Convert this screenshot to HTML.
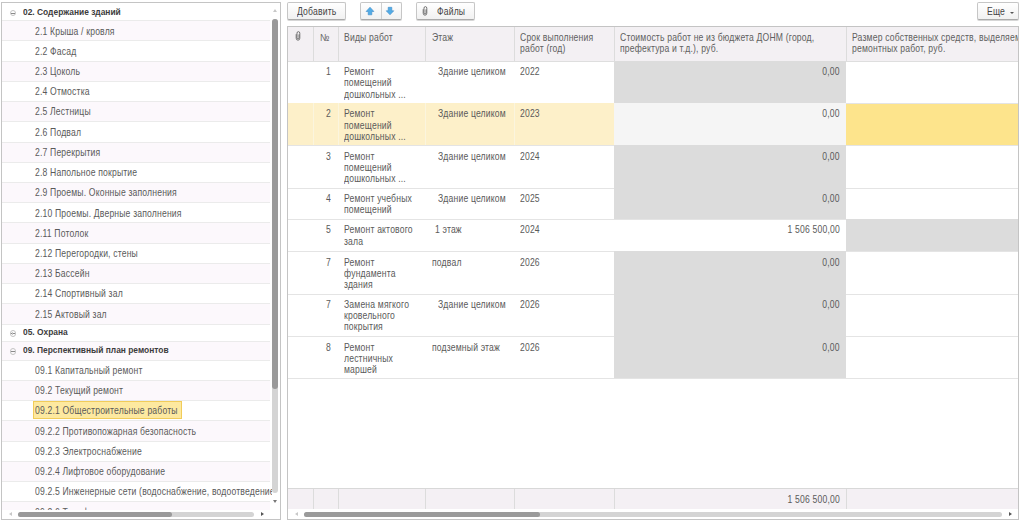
<!DOCTYPE html><html><head><meta charset="utf-8"><style>
*{margin:0;padding:0;box-sizing:border-box}
html,body{width:1024px;height:522px;overflow:hidden;background:#fff}
body{position:relative;font-family:"Liberation Sans",sans-serif;font-size:10.2px;color:#5a5a5a}
.a{position:absolute}
.t{position:absolute;white-space:nowrap;line-height:11px;height:11px;margin-top:-8.1px;transform:scaleX(.845);letter-spacing:.2px;transform-origin:0 0}
.r{transform-origin:100% 0}
.b{position:absolute;white-space:nowrap;font-weight:bold;font-size:9.2px;line-height:11px;margin-top:-6.7px;color:#3c3c3c;transform:scaleX(.915);transform-origin:0 0}
.hl{position:absolute;height:1px;background:#e6e6e6}
.vl{position:absolute;width:1px;background:#dcdcdc}
.btn{position:absolute;border:1px solid #c6c6c6;border-bottom-color:#aaa;border-radius:2px;background:linear-gradient(#fff,#f1f1f1);box-shadow:0 1px 0 #d6d6d6}
</style></head><body>
<div class="a" style="left:1px;top:2px;width:280px;height:518px;border:1px solid #c4c4c4;background:#fff;overflow:hidden"></div>
<div class="a" style="left:2px;top:3px;width:270px;height:507px;overflow:hidden">
<div class="a" style="left:0;top:0px;width:268px;height:17px;background:#fff"></div>
<div class="a" style="left:0;top:17px;width:268px;height:20px;background:#fcf8fc"></div>
<div class="a" style="left:0;top:37px;width:268px;height:21px;background:#fff"></div>
<div class="a" style="left:0;top:58px;width:268px;height:20px;background:#fcf8fc"></div>
<div class="a" style="left:0;top:78px;width:268px;height:20px;background:#fff"></div>
<div class="a" style="left:0;top:98px;width:268px;height:20px;background:#fcf8fc"></div>
<div class="a" style="left:0;top:118px;width:268px;height:21px;background:#fff"></div>
<div class="a" style="left:0;top:139px;width:268px;height:20px;background:#fcf8fc"></div>
<div class="a" style="left:0;top:159px;width:268px;height:20px;background:#fff"></div>
<div class="a" style="left:0;top:179px;width:268px;height:20px;background:#fcf8fc"></div>
<div class="a" style="left:0;top:199px;width:268px;height:20px;background:#fff"></div>
<div class="a" style="left:0;top:219px;width:268px;height:21px;background:#fcf8fc"></div>
<div class="a" style="left:0;top:240px;width:268px;height:20px;background:#fff"></div>
<div class="a" style="left:0;top:260px;width:268px;height:20px;background:#fcf8fc"></div>
<div class="a" style="left:0;top:280px;width:268px;height:20px;background:#fff"></div>
<div class="a" style="left:0;top:300px;width:268px;height:21px;background:#fcf8fc"></div>
<div class="a" style="left:0;top:321px;width:268px;height:17px;background:#fff"></div>
<div class="a" style="left:0;top:338px;width:268px;height:19px;background:#fcf8fc"></div>
<div class="a" style="left:0;top:357px;width:268px;height:20px;background:#fff"></div>
<div class="a" style="left:0;top:377px;width:268px;height:20px;background:#fcf8fc"></div>
<div class="a" style="left:0;top:397px;width:268px;height:20px;background:#fff"></div>
<div class="a" style="left:0;top:417px;width:268px;height:21px;background:#fcf8fc"></div>
<div class="a" style="left:0;top:438px;width:268px;height:20px;background:#fff"></div>
<div class="a" style="left:0;top:458px;width:268px;height:20px;background:#fcf8fc"></div>
<div class="a" style="left:0;top:478px;width:268px;height:20px;background:#fff"></div>
<div class="a" style="left:0;top:498px;width:268px;height:21px;background:#fcf8fc"></div>
<div class="hl" style="left:0;top:17px;width:268px;background:#ebebeb"></div>
<div class="hl" style="left:0;top:37px;width:268px;background:#ebebeb"></div>
<div class="hl" style="left:0;top:58px;width:268px;background:#ebebeb"></div>
<div class="hl" style="left:0;top:78px;width:268px;background:#ebebeb"></div>
<div class="hl" style="left:0;top:98px;width:268px;background:#ebebeb"></div>
<div class="hl" style="left:0;top:118px;width:268px;background:#ebebeb"></div>
<div class="hl" style="left:0;top:139px;width:268px;background:#ebebeb"></div>
<div class="hl" style="left:0;top:159px;width:268px;background:#ebebeb"></div>
<div class="hl" style="left:0;top:179px;width:268px;background:#ebebeb"></div>
<div class="hl" style="left:0;top:199px;width:268px;background:#ebebeb"></div>
<div class="hl" style="left:0;top:219px;width:268px;background:#ebebeb"></div>
<div class="hl" style="left:0;top:240px;width:268px;background:#ebebeb"></div>
<div class="hl" style="left:0;top:260px;width:268px;background:#ebebeb"></div>
<div class="hl" style="left:0;top:280px;width:268px;background:#ebebeb"></div>
<div class="hl" style="left:0;top:300px;width:268px;background:#ebebeb"></div>
<div class="hl" style="left:0;top:321px;width:268px;background:#ebebeb"></div>
<div class="hl" style="left:0;top:338px;width:268px;background:#ebebeb"></div>
<div class="hl" style="left:0;top:357px;width:268px;background:#ebebeb"></div>
<div class="hl" style="left:0;top:377px;width:268px;background:#ebebeb"></div>
<div class="hl" style="left:0;top:397px;width:268px;background:#ebebeb"></div>
<div class="hl" style="left:0;top:417px;width:268px;background:#ebebeb"></div>
<div class="hl" style="left:0;top:438px;width:268px;background:#ebebeb"></div>
<div class="hl" style="left:0;top:458px;width:268px;background:#ebebeb"></div>
<div class="hl" style="left:0;top:478px;width:268px;background:#ebebeb"></div>
<div class="hl" style="left:0;top:498px;width:268px;background:#ebebeb"></div>
<div class="hl" style="left:0;top:519px;width:268px;background:#ebebeb"></div>
<div class="b" style="left:21px;top:10.4px;">02. Содержание зданий</div>
<div class="a" style="left:7.5px;top:6.9px;width:6.6px;height:6.6px;border:1px solid #c4c4c4;border-radius:50%"></div>
<div class="a" style="left:9px;top:9.6px;width:3.6px;height:1.2px;background:#8a8a8a"></div>
<div class="t" style="left:33px;top:30.6px;">2.1 Крыша / кровля</div>
<div class="t" style="left:33px;top:50.8px;">2.2 Фасад</div>
<div class="t" style="left:33px;top:71.0px;">2.3 Цоколь</div>
<div class="t" style="left:33px;top:91.3px;">2.4 Отмостка</div>
<div class="t" style="left:33px;top:111.5px;">2.5 Лестницы</div>
<div class="t" style="left:33px;top:131.7px;">2.6 Подвал</div>
<div class="t" style="left:33px;top:151.9px;">2.7 Перекрытия</div>
<div class="t" style="left:33px;top:172.1px;">2.8 Напольное покрытие</div>
<div class="t" style="left:33px;top:192.4px;">2.9 Проемы. Оконные заполнения</div>
<div class="t" style="left:33px;top:212.6px;">2.10 Проемы. Дверные заполнения</div>
<div class="t" style="left:33px;top:232.8px;">2.11 Потолок</div>
<div class="t" style="left:33px;top:253.0px;">2.12 Перегородки, стены</div>
<div class="t" style="left:33px;top:273.2px;">2.13 Бассейн</div>
<div class="t" style="left:33px;top:293.5px;">2.14 Спортивный зал</div>
<div class="t" style="left:33px;top:313.7px;">2.15 Актовый зал</div>
<div class="b" style="left:21px;top:330.9px;">05. Охрана</div>
<div class="a" style="left:7.5px;top:327.4px;width:6.6px;height:6.6px;border:1px solid #c4c4c4;border-radius:50%"></div>
<div class="a" style="left:9px;top:330.1px;width:3.6px;height:1.2px;background:#8a8a8a"></div>
<div class="a" style="left:10.3px;top:328.9px;width:1px;height:3.6px;background:#c8c8c8"></div>
<div class="b" style="left:21px;top:348.5px;">09. Перспективный план ремонтов</div>
<div class="a" style="left:7.5px;top:345.0px;width:6.6px;height:6.6px;border:1px solid #c4c4c4;border-radius:50%"></div>
<div class="a" style="left:9px;top:347.7px;width:3.6px;height:1.2px;background:#8a8a8a"></div>
<div class="t" style="left:33px;top:370.0px;">09.1 Капитальный ремонт</div>
<div class="t" style="left:33px;top:390.2px;">09.2 Текущий ремонт</div>
<div class="a" style="left:31px;top:398px;width:149px;height:18px;background:#fde9a0;border:1px solid #f1cc5a"></div>
<div class="t" style="left:33px;top:410.5px;">09.2.1 Общестроительные работы</div>
<div class="t" style="left:33px;top:430.8px;">09.2.2 Противопожарная безопасность</div>
<div class="t" style="left:33px;top:451.0px;">09.2.3 Электроснабжение</div>
<div class="t" style="left:33px;top:471.2px;">09.2.4 Лифтовое оборудование</div>
<div class="t" style="left:33px;top:491.5px;">09.2.5 Инженерные сети (водоснабжение, водоотведение)</div>
<div class="t" style="left:33px;top:511.8px;">09.2.6 Телефонизация</div>
</div>
<div class="a" style="left:272px;top:19px;width:6px;height:474px;border-radius:3px;background:#d4d4d4"></div>
<div class="a" style="left:272px;top:19px;width:6px;height:370px;border-radius:3px;background:#9a9a9a"></div>
<div class="a" style="left:272.5px;top:9px;width:0;height:0;border-left:2.5px solid transparent;border-right:2.5px solid transparent;border-bottom:3px solid #c8c8c8"></div>
<div class="a" style="left:272.5px;top:499.5px;width:0;height:0;border-left:2.5px solid transparent;border-right:2.5px solid transparent;border-top:3px solid #777"></div>
<div class="a" style="left:18px;top:511.5px;width:236px;height:5.2px;border-radius:3px;background:#d4d4d4"></div>
<div class="a" style="left:18px;top:511.5px;width:154px;height:5.2px;border-radius:3px;background:#9a9a9a"></div>
<div class="a" style="left:8.5px;top:512px;width:0;height:0;border-top:2.5px solid transparent;border-bottom:2.5px solid transparent;border-right:3px solid #c8c8c8"></div>
<div class="a" style="left:260.5px;top:512px;width:0;height:0;border-top:2.5px solid transparent;border-bottom:2.5px solid transparent;border-left:3px solid #555"></div>
<div class="btn" style="left:287px;top:2px;width:59px;height:17.5px"></div>
<div class="t" style="left:297px;top:14.5px;color:#444;">Добавить</div>
<div class="btn" style="left:360px;top:2px;width:42px;height:17.5px"></div>
<div class="a" style="left:381px;top:3px;width:1px;height:16px;background:#cfcfcf"></div>
<svg class="a" style="left:365px;top:6px" width="10" height="10" viewBox="0 0 10 10"><path d="M5 1.2 L8.9 5.5 L6.8 5.5 L6.8 8.8 L3.2 8.8 L3.2 5.5 L1.1 5.5 Z" fill="#52ace6" stroke="#3f8cc8" stroke-width="0.6" stroke-linejoin="round"/></svg>
<svg class="a" style="left:385px;top:6px" width="10" height="10" viewBox="0 0 10 10"><path d="M5 8.8 L8.8 4.8 L6.8 4.8 L6.8 1.3 L3.2 1.3 L3.2 4.8 L1.2 4.8 Z" fill="#52ace6" stroke="#3f8cc8" stroke-width="0.6" stroke-linejoin="round"/></svg>
<div class="btn" style="left:416px;top:2px;width:59px;height:17.5px"></div>
<svg class="a" style="left:422px;top:5.5px" width="6" height="10" viewBox="0 0 6 10"><path d="M1.2 3.2 L1.2 7.2 Q1.2 9.2 3 9.2 Q4.8 9.2 4.8 7.2 L4.8 2.2 Q4.8 0.6 3.4 0.6 Q2 0.6 2 2.2 L2 6.8 Q2 7.8 3 7.8 Q4 7.8 4 6.8 L4 3.4" fill="none" stroke="#666" stroke-width="0.9"/></svg>
<div class="t" style="left:437px;top:14.5px;color:#444;">Файлы</div>
<div class="btn" style="left:976.5px;top:2px;width:42px;height:17.5px"></div>
<div class="t" style="left:987px;top:14.5px;color:#444;">Еще</div>
<div class="a" style="left:1009.5px;top:11.5px;width:0;height:0;border-left:2.5px solid transparent;border-right:2.5px solid transparent;border-top:2.5px solid #555"></div>
<div class="a" style="left:287px;top:26px;width:732px;height:494px;border:1px solid #c4c4c4;background:#fff"></div>
<div class="a" style="left:288px;top:27px;width:730px;height:492px;overflow:hidden">
<div class="a" style="left:0;top:0;width:800px;height:33.5px;background:#f3f0f3"></div>
<div class="hl" style="left:0;top:33.5px;width:800px;background:#dedede"></div>
<div class="vl" style="left:25.3px;top:0;height:33.5px;background:#dcdcdc"></div>
<div class="vl" style="left:49.5px;top:0;height:33.5px;background:#dcdcdc"></div>
<div class="vl" style="left:137.3px;top:0;height:33.5px;background:#dcdcdc"></div>
<div class="vl" style="left:225.5px;top:0;height:33.5px;background:#dcdcdc"></div>
<div class="vl" style="left:325.5px;top:0;height:33.5px;background:#dcdcdc"></div>
<div class="vl" style="left:557.8px;top:0;height:33.5px;background:#dcdcdc"></div>
<svg class="a" style="left:7px;top:4.2px" width="6" height="10" viewBox="0 0 6 10"><path d="M1.2 3.2 L1.2 7.2 Q1.2 9.2 3 9.2 Q4.8 9.2 4.8 7.2 L4.8 2.2 Q4.8 0.6 3.4 0.6 Q2 0.6 2 2.2 L2 6.8 Q2 7.8 3 7.8 Q4 7.8 4 6.8 L4 3.4" fill="none" stroke="#666" stroke-width="0.9"/></svg>
<div class="t" style="left:32px;top:13.2px;color:#606060;">№</div>
<div class="t" style="left:56.2px;top:13.2px;color:#606060;">Виды работ</div>
<div class="t" style="left:144.1px;top:13.2px;color:#606060;">Этаж</div>
<div class="t" style="left:231.7px;top:13.2px;color:#606060;">Срок выполнения</div>
<div class="t" style="left:231.7px;top:23.7px;color:#606060;">работ (год)</div>
<div class="t" style="left:331.8px;top:13.2px;color:#606060;">Стоимость работ не из бюджета ДОНМ (город,</div>
<div class="t" style="left:331.8px;top:23.7px;color:#606060;">префектура и т.д.), руб.</div>
<div class="t" style="left:564px;top:13.2px;color:#606060;">Размер собственных средств, выделяемых на проведение</div>
<div class="t" style="left:564px;top:23.7px;color:#606060;">ремонтных работ, руб.</div>
<div class="a" style="left:326px;top:34px;width:232px;height:42px;background:#dcdcdc"></div>
<div class="hl" style="left:0;top:76px;width:800px;background:#e4e4e4"></div>
<div class="t r" style="right:687px;top:47.1px;">1</div>
<div class="t" style="left:56px;top:47.1px;">Ремонт</div>
<div class="t" style="left:56px;top:58.35px;">помещений</div>
<div class="t" style="left:56px;top:69.6px;">дошкольных ...</div>
<div class="t" style="left:149.8px;top:47.1px;">Здание целиком</div>
<div class="t" style="left:231.6px;top:47.1px;">2022</div>
<div class="t r" style="right:178.5px;top:47.1px;">0,00</div>
<div class="a" style="left:0;top:76px;width:325.5px;height:42px;background:#fdf0c9"></div>
<div class="vl" style="left:25.3px;top:76px;height:42px;background:#fbf5de"></div>
<div class="vl" style="left:49.5px;top:76px;height:42px;background:#fbf5de"></div>
<div class="vl" style="left:137.3px;top:76px;height:42px;background:#fbf5de"></div>
<div class="vl" style="left:225.5px;top:76px;height:42px;background:#fbf5de"></div>
<div class="vl" style="left:325.5px;top:76px;height:42px;background:#fbf5de"></div>
<div class="a" style="left:326px;top:76px;width:232px;height:42px;background:#f5f5f5"></div>
<div class="a" style="left:558px;top:77px;width:200px;height:41px;background:#fde48c"></div>
<div class="hl" style="left:0;top:118px;width:800px;background:#e4e4e4"></div>
<div class="t r" style="right:687px;top:89.4px;">2</div>
<div class="t" style="left:56px;top:89.4px;">Ремонт</div>
<div class="t" style="left:56px;top:100.65px;">помещений</div>
<div class="t" style="left:56px;top:111.9px;">дошкольных ...</div>
<div class="t" style="left:149.8px;top:89.4px;">Здание целиком</div>
<div class="t" style="left:231.6px;top:89.4px;">2023</div>
<div class="t r" style="right:178.5px;top:89.4px;">0,00</div>
<div class="a" style="left:326px;top:118px;width:232px;height:43px;background:#dcdcdc"></div>
<div class="hl" style="left:0;top:161px;width:800px;background:#e4e4e4"></div>
<div class="t r" style="right:687px;top:131.8px;">3</div>
<div class="t" style="left:56px;top:131.8px;">Ремонт</div>
<div class="t" style="left:56px;top:143.05px;">помещений</div>
<div class="t" style="left:56px;top:154.3px;">дошкольных ...</div>
<div class="t" style="left:149.8px;top:131.8px;">Здание целиком</div>
<div class="t" style="left:231.6px;top:131.8px;">2024</div>
<div class="t r" style="right:178.5px;top:131.8px;">0,00</div>
<div class="a" style="left:326px;top:161px;width:232px;height:31px;background:#dcdcdc"></div>
<div class="hl" style="left:0;top:192px;width:800px;background:#e4e4e4"></div>
<div class="t r" style="right:687px;top:173.9px;">4</div>
<div class="t" style="left:56px;top:173.9px;">Ремонт учебных</div>
<div class="t" style="left:56px;top:185.15px;">помещений</div>
<div class="t" style="left:149.8px;top:173.9px;">Здание целиком</div>
<div class="t" style="left:231.6px;top:173.9px;">2025</div>
<div class="t r" style="right:178.5px;top:173.9px;">0,00</div>
<div class="a" style="left:558px;top:192px;width:200px;height:32px;background:#dcdcdc"></div>
<div class="hl" style="left:0;top:224px;width:800px;background:#e4e4e4"></div>
<div class="t r" style="right:687px;top:205.5px;">5</div>
<div class="t" style="left:56px;top:205.5px;">Ремонт актового</div>
<div class="t" style="left:56px;top:216.75px;">зала</div>
<div class="t" style="left:147px;top:205.5px;">1 этаж</div>
<div class="t" style="left:231.6px;top:205.5px;">2024</div>
<div class="t r" style="right:178.5px;top:205.5px;">1 506 500,00</div>
<div class="a" style="left:326px;top:224px;width:232px;height:43px;background:#dcdcdc"></div>
<div class="hl" style="left:0;top:267px;width:800px;background:#e4e4e4"></div>
<div class="t r" style="right:687px;top:237.6px;">7</div>
<div class="t" style="left:56px;top:237.6px;">Ремонт</div>
<div class="t" style="left:56px;top:248.85px;">фундамента</div>
<div class="t" style="left:56px;top:260.1px;">здания</div>
<div class="t" style="left:143.6px;top:237.6px;">подвал</div>
<div class="t" style="left:231.6px;top:237.6px;">2026</div>
<div class="t r" style="right:178.5px;top:237.6px;">0,00</div>
<div class="a" style="left:326px;top:267px;width:232px;height:42px;background:#dcdcdc"></div>
<div class="hl" style="left:0;top:309px;width:800px;background:#e4e4e4"></div>
<div class="t r" style="right:687px;top:279.9px;">7</div>
<div class="t" style="left:56px;top:279.9px;">Замена мягкого</div>
<div class="t" style="left:56px;top:291.15px;">кровельного</div>
<div class="t" style="left:56px;top:302.4px;">покрытия</div>
<div class="t" style="left:149.8px;top:279.9px;">Здание целиком</div>
<div class="t" style="left:231.6px;top:279.9px;">2026</div>
<div class="t r" style="right:178.5px;top:279.9px;">0,00</div>
<div class="a" style="left:326px;top:309px;width:232px;height:42px;background:#dcdcdc"></div>
<div class="hl" style="left:0;top:351px;width:800px;background:#e4e4e4"></div>
<div class="t r" style="right:687px;top:322.7px;">8</div>
<div class="t" style="left:56px;top:322.7px;">Ремонт</div>
<div class="t" style="left:56px;top:333.95px;">лестничных</div>
<div class="t" style="left:56px;top:345.2px;">маршей</div>
<div class="t" style="left:143.6px;top:322.7px;">подземный этаж</div>
<div class="t" style="left:231.6px;top:322.7px;">2026</div>
<div class="t r" style="right:178.5px;top:322.7px;">0,00</div>
<div class="hl" style="left:0;top:461px;width:800px;background:#d8d8d8"></div>
<div class="a" style="left:0;top:462px;width:800px;height:20px;background:#f4f0f4"></div>
<div class="vl" style="left:25.3px;top:462px;height:20px;background:#dcdcdc"></div>
<div class="vl" style="left:49.5px;top:462px;height:20px;background:#dcdcdc"></div>
<div class="vl" style="left:137.3px;top:462px;height:20px;background:#dcdcdc"></div>
<div class="vl" style="left:225.5px;top:462px;height:20px;background:#dcdcdc"></div>
<div class="vl" style="left:325.5px;top:462px;height:20px;background:#dcdcdc"></div>
<div class="vl" style="left:557.8px;top:462px;height:20px;background:#dcdcdc"></div>
<div class="t r" style="right:178.5px;top:475.5px;">1 506 500,00</div>
<div class="a" style="left:16px;top:484.5px;width:698px;height:5.2px;border-radius:3px;background:#d4d4d4"></div>
<div class="a" style="left:16px;top:484.5px;width:236px;height:5.2px;border-radius:3px;background:#9a9a9a"></div>
<div class="a" style="left:6.5px;top:485px;width:0;height:0;border-top:2.5px solid transparent;border-bottom:2.5px solid transparent;border-right:3px solid #c8c8c8"></div>
<div class="a" style="left:721px;top:485px;width:0;height:0;border-top:2.5px solid transparent;border-bottom:2.5px solid transparent;border-left:3px solid #555"></div>
</div>
</body></html>
